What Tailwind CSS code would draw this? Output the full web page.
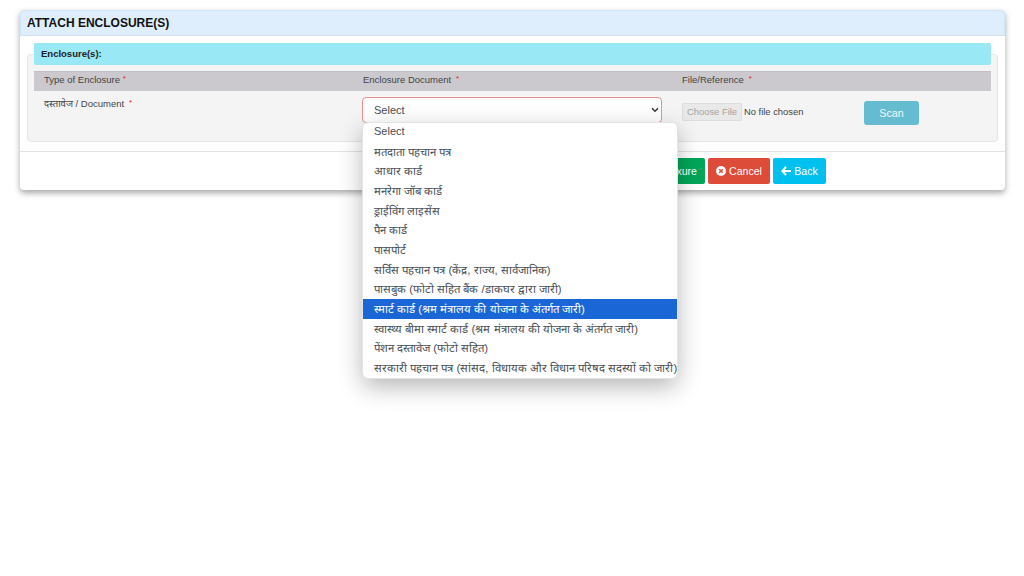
<!DOCTYPE html>
<html lang="hi">
<head>
    <meta charset="UTF-8" />
    <title>Attach Enclosure</title>
    <script src="https://cdn.jsdelivr.net/npm/@tailwindcss/browser@4"></script>
</head>
<body class="bg-white font-['Liberation_Sans',sans-serif] text-[9.5px] text-[#444]">
<div class="w-[1024px] h-[576px] overflow-hidden pt-[10px] px-[20px] relative">

    <!-- Card -->
    <div class="w-[985px] h-[180px] bg-white rounded-[4px] shadow-[0_3px_6px_rgba(0,0,0,0.35)]">
        <div class="h-[26px] bg-[#deeefc] border border-[#cfe5f8] border-b-[#d5e3ee] rounded-t-[4px] pl-[6px] flex items-center">
            <h1 class="text-[12px] font-bold text-[#111]">ATTACH ENCLOSURE(S)</h1>
        </div>

        <div class="h-[116px] px-[7px] pt-[18px] border-b border-[#e3e3e3]">
            <div class="h-[88px] bg-[#f4f4f4] border border-[#e6e6e6] rounded-[4px] px-[6px]">
                <div class="-mt-[12px] h-[22px] bg-[#99e8f6] rounded-[2px] pl-[7px] flex items-center font-bold text-[#222]">Enclosure(s):</div>

                <div class="mt-[6px] h-[20px] bg-[#cbc9cd] border-t border-[#c2c0c4] grid grid-cols-[319px_319px_1fr] pl-[10px] leading-[13px] text-[#444]">
                    <div>Type of Enclosure <span class="text-[#e02020] text-[8px] align-[2px]">*</span></div>
                    <div>Enclosure Document <span class="text-[#e02020] text-[8px] align-[2px]">&nbsp;*</span></div>
                    <div>File/Reference <span class="text-[#e02020] text-[8px] align-[2px]">&nbsp;*</span></div>
                </div>

                <div class="grid grid-cols-[319px_319px_1fr] pl-[10px] pt-[6px]">
                    <div class="font-['Liberation_Sans','Noto_Sans',sans-serif]">दस्तावेज / Document <span class="text-[#e02020] text-[8px] align-[2px]">&nbsp;*</span></div>
                    <div>
                        <div class="w-[300px] h-[26px] -ml-[1px] bg-white border border-[#ee8f8f] rounded-[4px] pl-[11px] pr-[2px] flex items-center justify-between text-[11px] text-[#495057]">
                            <span>Select</span>
                            <svg width="8" height="6" viewBox="0 0 8 6" fill="none" stroke="#333" stroke-width="1.4"><path d="M1 1.2l3 3 3-3"/></svg>
                        </div>
                    </div>
                    <div class="flex items-start">
                        <div class="w-[182px] mt-[6px] flex items-center text-[9.4px]">
                            <span class="w-[60px] h-[18px] bg-[#e9e9e9] border border-[#ddd] rounded-[2px] text-[#a3a3a3] flex items-center justify-center">Choose File</span>
                            <span class="ml-[2px] text-[#444]">No file chosen</span>
                        </div>
                        <button class="mt-[4px] w-[55px] h-[24px] bg-[#65bcd0] rounded-[3px] text-white/90 text-[10.7px]">Scan</button>
                    </div>
                </div>
            </div>
        </div>

        <!-- Footer buttons -->
        <div class="flex justify-start gap-[3px] pl-[588px] pt-[6px] text-[10.6px] text-white">
            <button class="w-[97px] h-[26px] bg-[#00a65a] rounded-[2px] text-right pr-[8px] pt-[1px]">Save Annexure</button>
            <button class="w-[62px] h-[26px] bg-[#dd4b39] rounded-[2px] flex items-center justify-center gap-[3px] pt-[1px]">
                <svg class="-mt-[1px]" width="10" height="10" viewBox="0 0 10 10"><circle cx="5" cy="5" r="5" fill="#fff"/><path d="M3.2 3.2l3.6 3.6M6.8 3.2l-3.6 3.6" stroke="#dd4b39" stroke-width="1.5"/></svg>
                Cancel
            </button>
            <button class="w-[53px] h-[26px] bg-[#00c0ef] rounded-[2px] flex items-center justify-center gap-[3px] pt-[1px]">
                <svg class="-mt-[1px]" width="10" height="10" viewBox="0 0 10 10" fill="none" stroke="#fff" stroke-width="2"><path d="M5 1L1.4 5 5 9M1.6 5H10"/></svg>
                Back
            </button>
        </div>
    </div>

    <!-- Open select list -->
    <ul class="absolute left-[363px] top-[123px] w-[314px] h-[255px] bg-white rounded-[5px] shadow-[0_0_0_1px_#e4e4e4,0_8px_24px_rgba(0,0,0,0.3)] overflow-hidden text-[11.35px] text-[#495057] leading-[20px] whitespace-nowrap">
        <li class="pl-[11px] h-[18.5px] leading-[17px] text-[11px]">Select</li>
        <li class="pl-[11px] h-[19.7px]">मतदाता पहचान पत्र</li>
        <li class="pl-[11px] h-[19.7px]">आधार कार्ड</li>
        <li class="pl-[11px] h-[19.7px]">मनरेगा जॉब कार्ड</li>
        <li class="pl-[11px] h-[19.7px]">ड्राईविंग लाइसेंस</li>
        <li class="pl-[11px] h-[19.7px]">पैन कार्ड</li>
        <li class="pl-[11px] h-[19.7px]">पासपोर्ट</li>
        <li class="pl-[11px] h-[19.7px]">सर्विस पहचान पत्र (केंद्र, राज्य, सार्वजानिक)</li>
        <li class="pl-[11px] h-[19.7px]">पासबुक (फोटो सहित बैंक /डाकघर द्वारा जारी)</li>
        <li class="pl-[11px] h-[19.7px] bg-[#1a66d6] text-white">स्मार्ट कार्ड (श्रम मंत्रालय की योजना के अंतर्गत जारी)</li>
        <li class="pl-[11px] h-[19.7px]">स्वास्थ्य बीमा स्मार्ट कार्ड (श्रम मंत्रालय की योजना के अंतर्गत जारी)</li>
        <li class="pl-[11px] h-[19.7px]">पेंशन दस्तावेज (फोटो सहित)</li>
        <li class="pl-[11px] h-[19.7px]">सरकारी पहचान पत्र (सांसद, विधायक और विधान परिषद सदस्यों को जारी)</li>
    </ul>
</div>
</body>
</html>
